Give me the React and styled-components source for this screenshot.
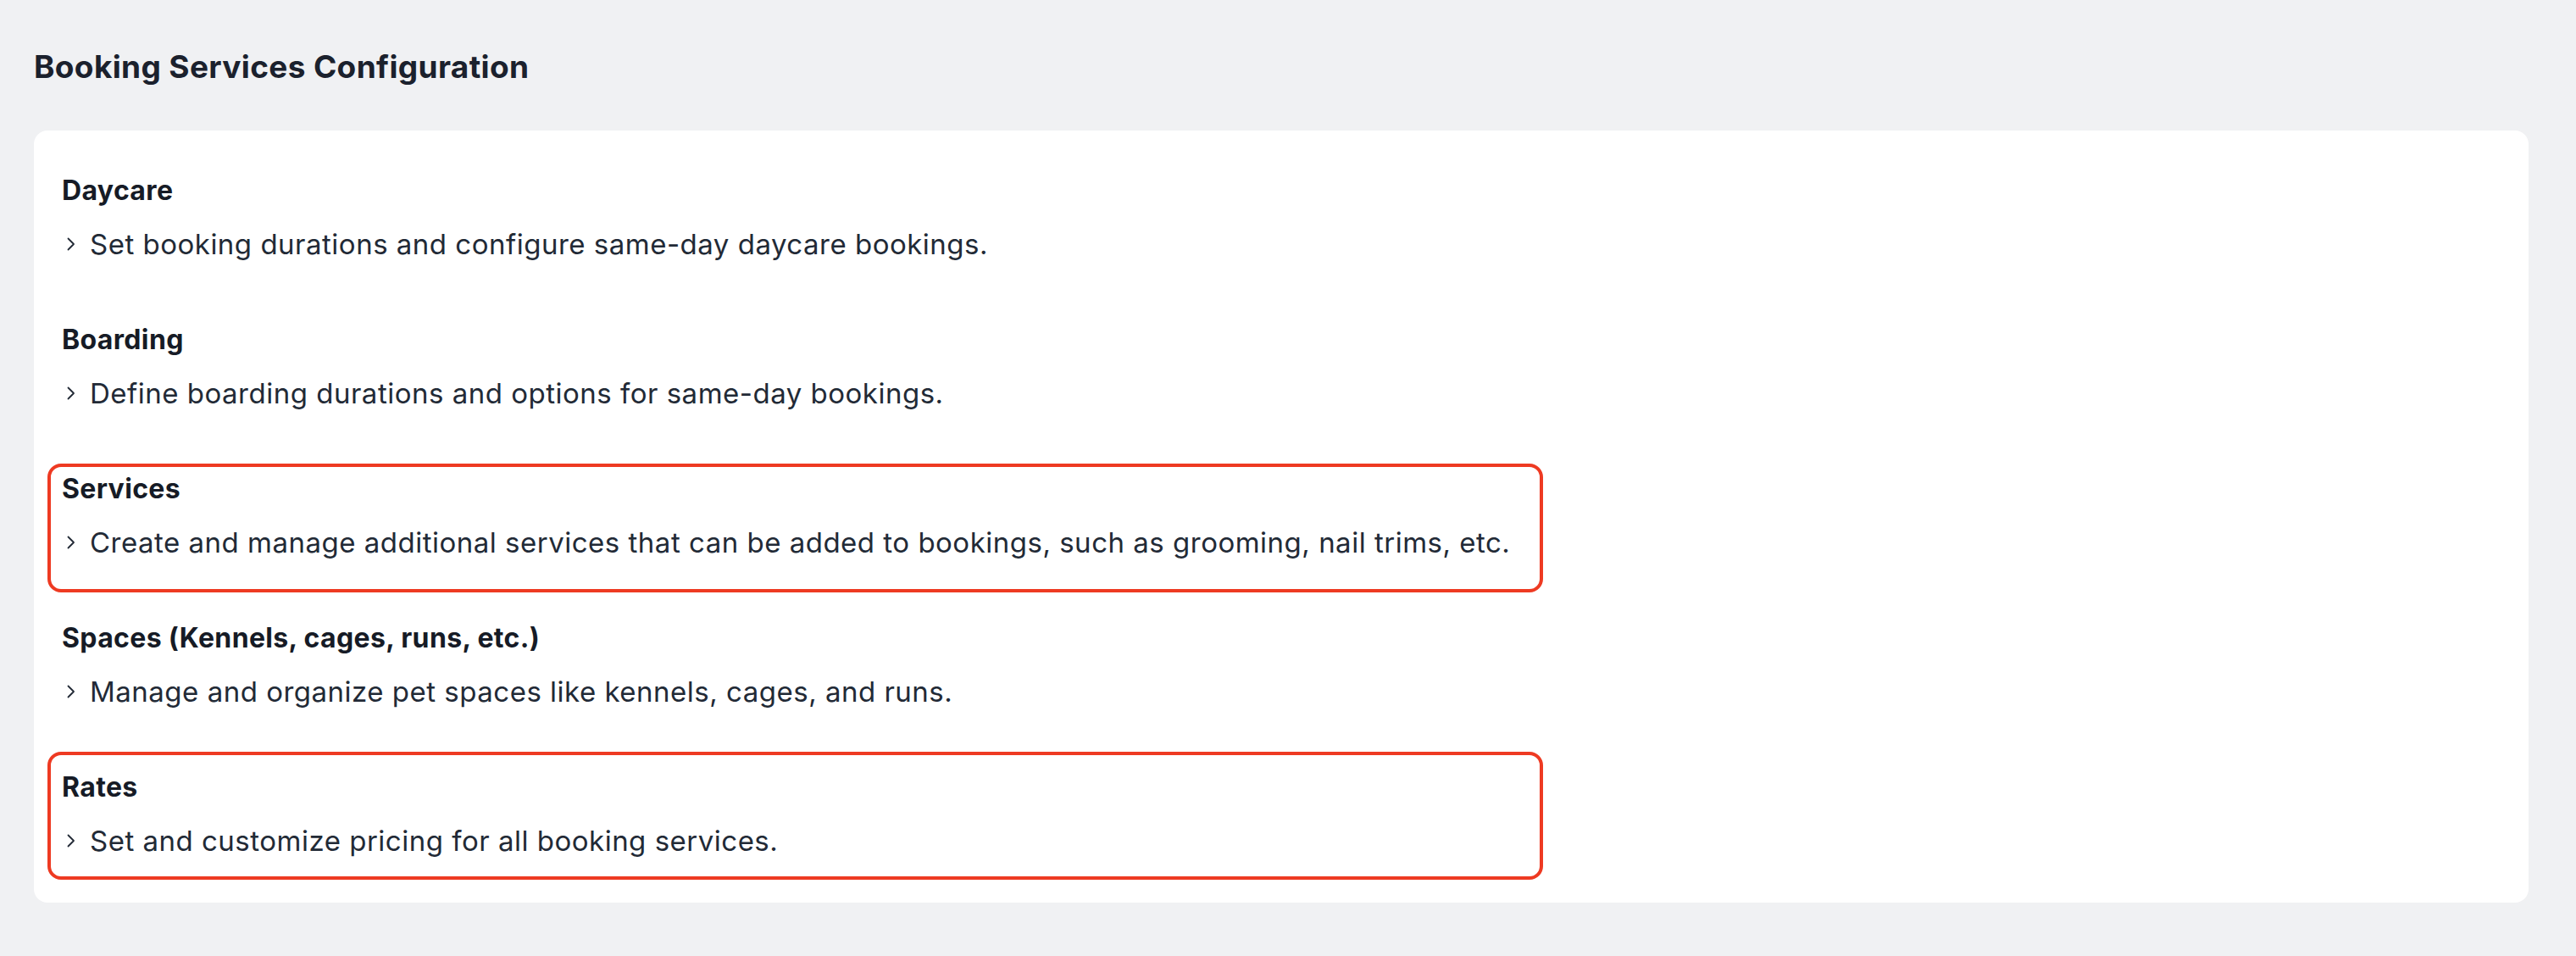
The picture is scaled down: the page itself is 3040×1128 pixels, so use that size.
import React from "react";
import styled, { createGlobalStyle } from "styled-components";

const GlobalStyle = createGlobalStyle`
  html, body { margin: 0; padding: 0; background: #f0f1f3; }
  body { font-family: "Inter", "Liberation Sans", sans-serif; color: #1a202c; }
`;

const Page = styled.div`
  padding: 0 56px 40px 40px;
`;

const Title = styled.h1`
  margin: 0;
  padding-top: 52px;
  font-size: 37px;
  line-height: 54px;
  font-weight: 700;
  letter-spacing: 0.35px;
  color: #1b212d;
`;

const Card = styled.section`
  margin-top: 48px;
  background: #ffffff;
  border-radius: 16px;
  padding: 47px 33px 49px;
  display: flex;
  flex-direction: column;
  gap: 65px;
`;

const Item = styled.div`
  position: relative;
  display: flex;
  flex-direction: column;
  gap: 15px;
  &::before {
    content: "";
    display: ${(p) => (p.$box ? "block" : "none")};
    position: absolute;
    top: ${(p) => (p.$box ? p.$box.top : 0)}px;
    left: -17px;
    width: 1765px;
    height: ${(p) => (p.$box ? p.$box.height : 0)}px;
    box-sizing: border-box;
    border: 4px solid #ee3a22;
    border-radius: 16px;
    pointer-events: none;
  }
`;

const Heading = styled.h2`
  margin: 0;
  font-size: 32px;
  line-height: 48px;
  font-weight: 700;
  letter-spacing: 0.35px;
  color: #161b26;
`;

const Description = styled.p`
  margin: 0;
  display: flex;
  align-items: center;
  gap: 17px;
  font-size: 33px;
  line-height: 48px;
  font-weight: 400;
  letter-spacing: 0.5px;
  color: #222a36;
`;

const Chevron = styled.svg`
  flex: none;
  margin-left: 6px;
`;

const sections = [
  { title: "Daycare", text: "Set booking durations and configure same-day daycare bookings." },
  { title: "Boarding", text: "Define boarding durations and options for same-day bookings." },
  {
    title: "Services",
    text: "Create and manage additional services that can be added to bookings, such as grooming, nail trims, etc.",
    box: { top: -6, height: 152 },
  },
  { title: "Spaces (Kennels, cages, runs, etc.)", text: "Manage and organize pet spaces like kennels, cages, and runs." },
  { title: "Rates", text: "Set and customize pricing for all booking services.", box: { top: -18, height: 151 } },
];

export default function App() {
  return (
    <Page>
      <GlobalStyle />
      <Title>Booking Services Configuration</Title>
      <Card>
        {sections.map((s) => (
          <Item key={s.title} $box={s.box}>
            <Heading>{s.title}</Heading>
            <Description>
              <Chevron width="10" height="20" viewBox="0 0 10 20" aria-hidden="true">
                <polyline
                  points="1.5,3.5 8,10 1.5,16.5"
                  fill="none"
                  stroke="#222a36"
                  strokeWidth="1.8"
                  strokeLinecap="round"
                  strokeLinejoin="round"
                />
              </Chevron>
              {s.text}
            </Description>
          </Item>
        ))}
      </Card>
    </Page>
  );
}
